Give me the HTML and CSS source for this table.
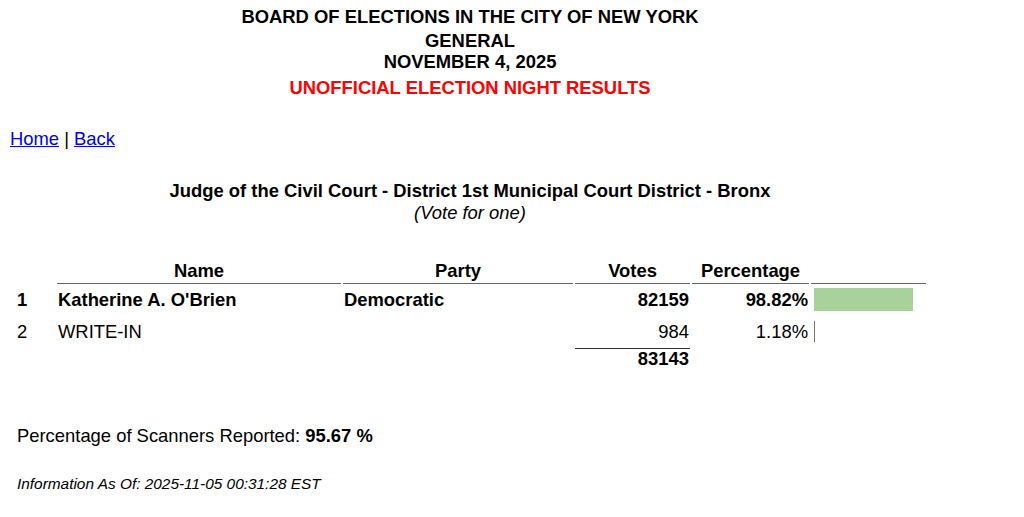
FILE: index.html
```html
<!DOCTYPE html>
<html>
<head>
<meta charset="utf-8">
<link rel="stylesheet" href="styles.css">
</head>
<body>
<div class="page">
  <div class="header">
    <div class="h-line h1">BOARD OF ELECTIONS IN THE CITY OF NEW YORK</div>
    <div class="h-line h2">GENERAL</div>
    <div class="h-line h3">NOVEMBER 4, 2025</div>
    <div class="h-line h4 red">UNOFFICIAL ELECTION NIGHT RESULTS</div>
  </div>
  <div class="nav"><a href="#">Home</a> | <a href="#">Back</a></div>
  <div class="contest">
    <div class="contest-title">Judge of the Civil Court - District 1st Municipal Court District - Bronx</div>
    <div class="contest-sub">(Vote for one)</div>
  </div>
  <table class="results">
    <colgroup>
      <col class="w-rank">
      <col class="w-name">
      <col class="w-party">
      <col class="w-votes">
      <col class="w-pct">
      <col class="w-bar">
    </colgroup>
    <thead>
      <tr>
        <th class="c-rank"></th>
        <th class="ul">Name</th>
        <th class="ul">Party</th>
        <th class="ul">Votes</th>
        <th class="ul">Percentage</th>
        <th class="ul"></th>
      </tr>
    </thead>
    <tbody>
      <tr class="row bold">
        <td class="c-rank">1</td>
        <td>Katherine A. O'Brien</td>
        <td>Democratic</td>
        <td class="num">82159</td>
        <td class="num">98.82%</td>
        <td class="c-bar"><div class="bar" style="width:99px"></div></td>
      </tr>
      <tr class="row">
        <td class="c-rank">2</td>
        <td>WRITE-IN</td>
        <td></td>
        <td class="num">984</td>
        <td class="num">1.18%</td>
        <td class="c-bar"><div class="bar small" style="width:1px"></div></td>
      </tr>
      <tr class="total bold">
        <td></td>
        <td></td>
        <td></td>
        <td class="num ol">83143</td>
        <td></td>
        <td></td>
      </tr>
    </tbody>
  </table>
  <div class="scanners">Percentage of Scanners Reported: <b>95.67 %</b></div>
  <div class="info">Information As Of: 2025-11-05 00:31:28 EST</div>
</div>
</body>
</html>
```

FILE: styles.css
```css
html, body {
  margin: 0;
  padding: 0;
  background: #fff;
}
body {
  font-family: "Liberation Sans", Arial, sans-serif;
  color: #000;
  font-size: 18.4px;
}
.page {
  width: 924px;
  margin: 0 0 0 8px;
}
.header {
  text-align: center;
  font-weight: bold;
  padding-top: 7px;
}
.h-line { line-height: 20px; }
.h2 { margin-top: 4px; }
.h3 { margin-top: 1px; }
.h4 { margin-top: 6px; }
.red { color: #ff0000; }
.nav {
  margin-top: 31px;
  padding-left: 2px;
  line-height: 20px;
}
.nav a { color: #0000ee; }
.contest {
  text-align: center;
  margin-top: 32px;
}
.contest-title {
  font-weight: bold;
  line-height: 20px;
}
.contest-sub {
  font-style: italic;
  line-height: 20px;
  margin-top: 2px;
}
.results {
  margin: 35px 0 0 5px;
  table-layout: fixed;
  width: 915px;
  border-collapse: separate;
  border-spacing: 2px;
}
.w-rank { width: 40px; }
.w-name { width: 284px; }
.w-party { width: 230px; }
.w-votes { width: 115px; }
.w-pct { width: 117px; }
.w-bar { width: 115px; }
.results th, .results td {
  padding: 1px;
  font-size: 18.4px;
}
.results th {
  font-weight: bold;
  text-align: center;
  line-height: 20px;
  padding-bottom: 2px;
}
.ul { border-bottom: 1px solid #666; }
.ol { border-top: 1px solid #333; }
.results td.c-rank { text-align: left; padding-left: 2px; }
.results td { line-height: 20px; height: 27px; }
.results .row.bold td { padding-bottom: 2px; padding-top: 0; }
.num { text-align: right; }
.bold td { font-weight: bold; }
.results td.c-bar { padding-left: 3px; }
.bar {
  height: 23px;
  background: #a9d19b;
}
.bar.small {
  height: 21px;
  background: #777;
}
.results .total td { height: 20px; padding-top: 0; }
.scanners {
  margin-top: 54px;
  padding-left: 9px;
  line-height: 20px;
}
.info {
  margin-top: 29px;
  padding-left: 9px;
  font-style: italic;
  font-size: 15.4px;
  line-height: 18px;
}
```
